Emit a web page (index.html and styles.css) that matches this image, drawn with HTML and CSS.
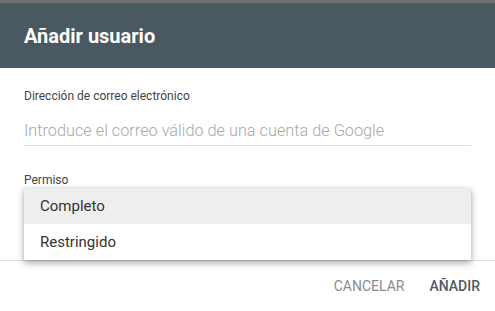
FILE: index.html
```html
<!DOCTYPE html>
<html lang="es">
<head>
<meta charset="utf-8">
<title>Añadir usuario</title>
<link rel="stylesheet" href="styles.css">
</head>
<body>
<div class="backdrop"></div>
<div class="dialog">
  <header class="header">Añadir usuario</header>
  <div class="content">
    <div class="field">
      <div class="label">Dirección de correo electrónico</div>
      <div class="input">Introduce el correo válido de una cuenta de Google</div>
    </div>
    <div class="field field-select">
      <div class="label">Permiso</div>
      <div class="select"></div>
      <ul class="menu">
        <li class="item active">Completo</li>
        <li class="item">Restringido</li>
      </ul>
    </div>
  </div>
  <footer class="footer">
    <span class="btn cancel">CANCELAR</span>
    <span class="btn add">AÑADIR</span>
  </footer>
</div>
</body>
</html>
```
FILE: styles.css
```css
html, body {
  margin: 0;
  padding: 0;
  background: #fff;
  font-family: Roboto, "Liberation Sans", Arial, sans-serif;
}
.backdrop {
  height: 3px;
  background: #6f7173;
}
.dialog {
  background: #fff;
}
.header {
  height: 65px;
  background: #4a5961;
  color: #fff;
  padding: 0 24px;
  display: flex;
  align-items: center;
  font-size: 20px;
  font-weight: 700;
}
.content {
  padding: 20px 24px 0;
}
.field {
  position: relative;
}
.label {
  font-size: 12px;
  line-height: 16px;
  color: #444;
}
.input {
  margin-top: 15px;
  font-size: 16.3px;
  font-weight: 300;
  line-height: 24px;
  color: #a8a8a8;
  padding-bottom: 2px;
  border-bottom: 1px solid #e0e0e0;
}
.field-select {
  margin-top: 26px;
}
.select {
  height: 72px;
}
.menu {
  position: absolute;
  left: 0;
  right: 0;
  top: 16px;
  margin: 0;
  padding: 0;
  list-style: none;
  background: #fff;
  box-shadow: 0 3px 7px rgba(0, 0, 0, 0.35), 0 0 2px rgba(0, 0, 0, 0.1);
  z-index: 2;
}
.item {
  height: 36px;
  display: flex;
  align-items: center;
  padding: 0 16px;
  font-size: 15px;
  color: #333;
}
.item.active {
  background: #eeeeee;
}
.footer {
  border-top: 1px solid #e0e0e0;
  display: flex;
  justify-content: flex-end;
  align-items: center;
  gap: 25px;
  height: 49px;
  padding-right: 15px;
}
.btn {
  font-size: 14px;
  color: #8a8a8a;
}
.btn.add {
  color: #505a60;
  font-weight: 500;
}
```
